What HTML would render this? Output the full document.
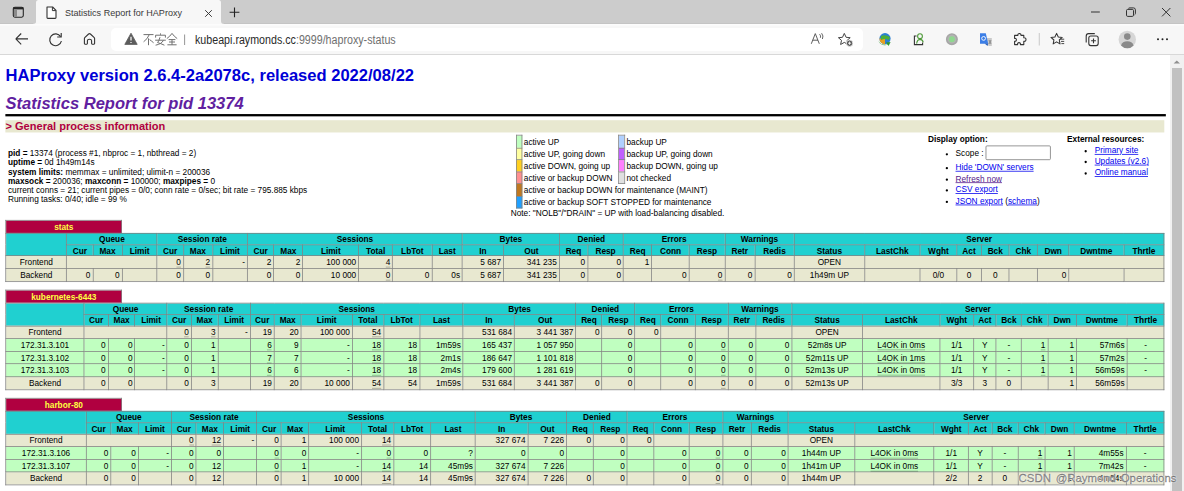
<!DOCTYPE html>
<html><head><meta charset="utf-8"><title>Statistics Report for HAProxy</title>
<style>
*{font-family:"Liberation Sans",sans-serif;}
html,body{margin:0;padding:0;background:#fff;overflow:hidden;width:1184px;height:491px;}
#chrome{position:absolute;left:0;top:0;width:1184px;height:55px;background:#f7f7f7;}
#tabstrip{position:absolute;left:0;top:0;width:1184px;height:24px;background:#cccccc;}
#tab{position:absolute;left:36.2px;top:0;width:184.8px;height:26px;background:#f7f7f7;border-radius:2.5px 2.5px 0 0;}
#toolbar-line{position:absolute;left:0;top:54px;width:1184px;height:1px;background:#d9d9d9;}
#addr{position:absolute;left:111px;top:28px;width:752px;height:23px;background:#fff;border-radius:5px;}
.abs{position:absolute;}
#vp{position:absolute;left:0;top:55px;width:1170px;height:436px;overflow:hidden;background:#fff;}
#sc{transform-origin:0 0;transform:scale(0.767);width:1525.424px;}
#zm{zoom:0.9;padding:8px;}
#zm *{font-family:"Liberation Sans",sans-serif;}
#zm{font-size:12px;font-weight:normal;color:black;background:white;}
#zm th,#zm td{font-size:12px;}
#zm h1{font-size:24px;margin:0 0 10.9px 0;padding-top:8.08px;font-weight:bold;}
#zm h1 a{color:#0000d6;text-decoration:none;}
#zm h2{font-size:24px;font-weight:bold;font-style:italic;color:#6020a0;margin:0 0 -1.2px 0;}
#zm h3{font-size:16px;font-weight:bold;color:#b00040;background:#e8e8d0;margin:0;}
#zm li{margin-top:0.25em;margin-right:20.5px;}
#zm hr.hr{margin:2.4px 0 6px 0;border:0;height:2.6px;background:#000;width:calc(100% + 2px);}
#zm p{margin:1em 0;}
.titre{background:#20D0D0;color:#000000;font-weight:bold;text-align:center;}
.frontend{background:#e8e8d0;}
.backend{background:#e8e8d0;}
.active_down{background:#ff9090;}
.active_going_up{background:#ffd020;}
.active_going_down{background:#ffffa0;}
.active_up{background:#c0ffc0;}
.active_no_check{background:#e0e0e0;}
.backup_going_up{background:#ff80ff;}
.backup_going_down{background:#c060ff;}
.backup_up{background:#b0d0ff;}
.maintain{background:#c07820;}
.softstop{background:#20a0ff;}
a.px{color:#ffff40;text-decoration:none;}
td,th{padding:1px;}
table.tbl{border-collapse:collapse;border-style:none;}
table.tbl td{text-align:right;border:1px solid gray;padding:2px 3px;white-space:nowrap;}
table.tbl td.ac{text-align:center;}
table.tbl th{border:1px solid gray;}
table.tbl th.pxname{background:#b00040;color:#ffff40;font-weight:bold;border-style:solid solid none solid;padding:2px 3px;white-space:nowrap;}
table.tbl th.empty{border-style:none;background:white;}
table.lgd{border-collapse:collapse;border-width:1px;border-style:none none none solid;border-color:black;}
table.lgd td{border:1px solid gray;padding:2px;}
table.lgd td.noborder{border-style:none;padding:2px;white-space:nowrap;}
u{text-decoration:none;border-bottom:1.45px solid rgba(0,0,0,0.33);}
.rls{letter-spacing:0.2em;margin-right:1px;}
ul{margin:0 0 1em 0;padding-left:40px;}
form{margin:0;}
a.lk{color:#0000ee;text-decoration:underline;}
a.lk.vis{color:#551a8b;}
.inp{display:inline-block;vertical-align:-6.5px;box-sizing:border-box;width:94px;height:22px;border:1px solid #767676;border-radius:2px;background:#fff;}
#scroll{position:absolute;left:1170px;top:55px;width:14px;height:436px;background:#f1f1f1;}
#thumb{position:absolute;left:2px;top:13px;width:10px;height:423px;background:#c1c1c1;}
#wm{position:absolute;left:1018.6px;top:472.2px;font-size:11.4px;line-height:13px;word-spacing:1.6px;color:rgba(150,150,150,0.95);-webkit-text-stroke:0.3px rgba(85,85,85,0.8);white-space:nowrap;text-shadow:0 0 1.5px #fff,0 0 1.5px #fff;}
</style></head><body>
<div id="chrome">
<div id="tabstrip"></div>
<div id="tab"></div>
<svg class="abs" style="left:0;top:0" width="1184" height="55" viewBox="0 0 1184 55">
  <!-- tab flares -->
  <path d="M33 24 Q36.2 24 36.2 21 L36.2 24 Z" fill="#f7f7f7"/>
  <path d="M221 21 Q221 24 224 24 L221 24 Z" fill="#f7f7f7"/>
  <!-- tab actions icon -->
  <rect x="13.3" y="7.2" width="10" height="10" rx="1.6" fill="none" stroke="#262626" stroke-width="1.1"/>
  <rect x="13.3" y="7.2" width="10" height="2.2" fill="#262626"/>
  <rect x="14" y="9" width="3" height="8" fill="#8a8a8a"/>
  <!-- page icon -->
  <path d="M47 7 H52.6 L56 10.4 V17.6 Q56 18.4 55.2 18.4 H47.8 Q47 18.4 47 17.6 Z" fill="#fff" stroke="#333" stroke-width="1.1" stroke-linejoin="round"/>
  <path d="M52.4 7.2 V10.6 H55.8" fill="none" stroke="#333" stroke-width="1"/>
  <!-- close tab -->
  <path d="M205.2 10.2 L211.8 16.8 M211.8 10.2 L205.2 16.8" stroke="#333" stroke-width="0.95"/>
  <!-- new tab -->
  <path d="M234.5 7.4 V17.2 M229.6 12.3 H239.4" stroke="#222" stroke-width="1.1"/>
  <!-- window controls -->
  <path d="M1091 12 H1099.8" stroke="#333" stroke-width="1"/>
  <rect x="1126.5" y="9.4" width="7" height="7" rx="1.2" fill="none" stroke="#333" stroke-width="1"/>
  <path d="M1128.4 8.4 Q1128.8 7.9 1130 7.9 H1133.5 Q1135.4 7.9 1135.4 9.8 V13.4 Q1135.4 14.4 1134.6 14.8" fill="none" stroke="#333" stroke-width="1"/>
  <path d="M1162 8 L1170.4 16.4 M1170.4 8 L1162 16.4" stroke="#333" stroke-width="1"/>
  <rect x="0" y="23.2" width="33" height="0.8" fill="#c2c2c2"/><rect x="224" y="23.2" width="960" height="0.8" fill="#c2c2c2"/><rect x="0" y="24" width="1184" height="1.6" fill="#fcfcfc"/>
  <!-- toolbar bottom line -->
  <rect x="0" y="54" width="1184" height="1" fill="#d8d8d8"/>
  <!-- address bar -->
  <rect x="111" y="28" width="752" height="23" rx="5" fill="#ffffff"/>
  <!-- back -->
  <path d="M15.6 38.9 H28 M15.8 38.9 L21.2 33.5 M15.8 38.9 L21.2 44.3" fill="none" stroke="#333" stroke-width="1.15"/>
  <!-- refresh -->
  <path d="M60.6 36.6 A5.9 5.9 0 1 0 61.4 41" fill="none" stroke="#333" stroke-width="1.15"/>
  <path d="M61.2 33 V37 H57.2" fill="none" stroke="#333" stroke-width="1.15"/>
  <!-- home -->
  <path d="M84.4 43.6 V38.6 Q84.4 38 85 37.4 L88.6 34 Q89.5 33.2 90.4 34 L94 37.4 Q94.6 38 94.6 38.6 V43.6 Q94.6 44.2 94 44.2 H92.2 Q91.6 44.2 91.6 43.6 V40.8 Q91.6 39.2 89.5 39.2 Q87.4 39.2 87.4 40.8 V43.6 Q87.4 44.2 86.8 44.2 H85 Q84.4 44.2 84.4 43.6 Z" fill="none" stroke="#333" stroke-width="1.1" stroke-linejoin="round"/>
  <!-- warning -->
  <path d="M131 33.2 L137.2 44.4 H124.8 Z" fill="#5c5c5c" stroke="#5c5c5c" stroke-width="0.8" stroke-linejoin="round"/>
  <path d="M131 36.8 V40.6 M131 42 V43" stroke="#fff" stroke-width="1.2"/>
  <!-- 不安全 -->
  <g fill="none" stroke="#707070" stroke-width="1">
    <path d="M143.5 34.6 H153.5 M149.2 34.8 Q147.5 39 143.6 41.8 M148.5 38.4 V45.2 M149.6 39.6 Q151.6 41 153.6 42.8"/>
    <path d="M160.5 33.4 V34.8 M155.6 37.6 V35.2 H165.4 V37.6 M155.2 40.2 H165.8 M160 37.2 Q159 41 157.6 42.6 Q161 43.6 164.4 45.2 M163.4 40.4 Q161.6 44 155.6 45.2"/>
    <path d="M172 33.4 Q170 36.4 166.8 38.6 M172 33.4 Q174 36.4 177.2 38.6 M168.6 39.6 H175.4 M169 42 H175 M167.4 44.8 H176.6 M172 39.6 V44.8"/>
  </g>
  <rect x="184.2" y="34.5" width="0.9" height="10.5" fill="#8a8a8a"/>
  <!-- read aloud -->
  <path d="M811.3 43.8 L815.3 33.6 L819.3 43.8 M812.7 40.2 H818" fill="none" stroke="#555" stroke-width="0.95"/>
  <path d="M819.6 34.2 Q821.2 35.8 820.4 37.8 M821.6 33.2 Q823.9 35.9 822.4 39" fill="none" stroke="#555" stroke-width="0.9"/>
  <!-- favorite add -->
  <path d="M844.3 33.4 L846.1 37.3 L850.2 37.7 L847.1 40.4 L848 44.5 L844.3 42.4 L840.6 44.5 L841.5 40.4 L838.4 37.7 L842.5 37.3 Z" fill="none" stroke="#444" stroke-width="1" stroke-linejoin="round"/>
  <circle cx="849.6" cy="43.2" r="3.2" fill="#555" stroke="#f7f7f7" stroke-width="0.8"/>
  <path d="M849.6 41.6 V44.8 M848 43.2 H851.2" stroke="#fff" stroke-width="0.9"/>
  <!-- IDM -->
  <circle cx="885" cy="38.6" r="5.6" fill="#2a7fd4"/>
  <path d="M879.4 38.6 A5.6 5.6 0 0 0 885 44.2 L885 38.6 Z" fill="#e8a020"/>
  <path d="M881 36 Q885 34 890 37 L889 40 Q885 38 881 40 Z" fill="#4caf3a"/>
  <path d="M878.2 40.4 Q881 45.6 887.4 44.4 L886 42.6 L890.6 42 L888.6 46 L887.8 44.8 Q881 46.6 878.2 40.4 Z" fill="#2e9a2e"/>
  <!-- person doc -->
  <path d="M916.6 36 H914.4 V44.6 H922.6 V42.4" fill="none" stroke="#333" stroke-width="1.1"/>
  <circle cx="920" cy="36.2" r="2.4" fill="none" stroke="#4f9a3a" stroke-width="1.1"/>
  <path d="M916.6 43.6 Q917.2 39.6 920 39.4 Q922.8 39.6 923.2 42.4" fill="none" stroke="#4f9a3a" stroke-width="1.1"/>
  <!-- gray circle -->
  <circle cx="951.9" cy="39.2" r="5.2" fill="#b3b3b3" stroke="#a6a6a6" stroke-width="1.6"/>
  <circle cx="951.9" cy="39.2" r="3" fill="#8fd88f"/>
  <!-- google translate -->
  <path d="M985.5 38 H991.8 V46 H988.5 Z" fill="#c9c9c9"/>
  <path d="M980 33.3 H985.8 L988.2 43.8 H980 Z" fill="#3c7ee6"/>
  <path d="M984.6 43.6 L987.6 46 L988.2 43.6 Z" fill="#2a5fb8"/>
  <circle cx="983.6" cy="38.4" r="1.9" fill="none" stroke="#fff" stroke-width="0.9"/>
  <path d="M989 40 L991 44 M991 40 L989 44" stroke="#666" stroke-width="0.6"/>
  <!-- extensions -->
  <path d="M1017.8 35.4 Q1017.8 33.2 1019.8 33.6 Q1021.2 34 1021 35.4 L1023.8 35.4 L1023.8 37.8 Q1026 37.6 1026 39.6 Q1026 41.6 1023.8 41.4 L1023.8 44.6 L1020.4 44.6 Q1020.6 42.6 1019 42.6 Q1017.4 42.6 1017.6 44.6 L1014.6 44.6 L1014.6 41.2 Q1016.4 41.4 1016.4 39.8 Q1016.4 38.2 1014.6 38.4 L1014.6 35.4 Z" fill="none" stroke="#333" stroke-width="1.1" stroke-linejoin="round"/>
  <rect x="1038.8" y="33" width="0.9" height="12.5" fill="#c4c4c4"/>
  <!-- favorites list -->
  <path d="M1056.6 33.4 L1058.3 37 L1062.2 37.4 L1059.3 40 L1060 43.9 L1056.6 41.9 L1053.2 43.9 L1053.9 40 L1051 37.4 L1054.9 37 Z" fill="none" stroke="#333" stroke-width="1.05" stroke-linejoin="round"/>
  <path d="M1060.6 39.2 H1064.2 M1061 41.4 H1064.2 M1061.4 43.6 H1064.2" stroke="#333" stroke-width="0.9"/>
  <!-- collections -->
  <rect x="1088.8" y="36" width="9.4" height="9.6" rx="2" fill="none" stroke="#333" stroke-width="1.1"/>
  <path d="M1086.2 42.6 V36.2 Q1086.2 33.6 1088.6 33.6 H1094.8" fill="none" stroke="#333" stroke-width="1.1"/>
  <path d="M1093.5 38.4 V43.2 M1091.1 40.8 H1095.9" stroke="#333" stroke-width="1.1"/>
  <!-- avatar -->
  <circle cx="1127.3" cy="39.5" r="8.7" fill="#d6d6d6"/>
  <circle cx="1127.3" cy="36.6" r="3.3" fill="#8a8a8a"/>
  <path d="M1121 45.4 Q1122.4 41.2 1127.3 41.2 Q1132.2 41.2 1133.6 45.4 Q1131 48.2 1127.3 48.2 Q1123.6 48.2 1121 45.4 Z" fill="#8a8a8a"/>
  <!-- more -->
  <circle cx="1158" cy="39.2" r="1" fill="#222"/><circle cx="1162.5" cy="39.2" r="1" fill="#222"/><circle cx="1167" cy="39.2" r="1" fill="#222"/>
</svg>
<div class="abs" style="left:64.8px;top:7px;font-size:9.8px;line-height:12px;color:#3a3a3a;white-space:nowrap;transform-origin:0 0;transform:scaleX(0.922)">Statistics Report for HAProxy</div>
<div class="abs" style="left:195px;top:32.5px;font-size:12px;line-height:14px;color:#2a2a2a;white-space:nowrap;transform-origin:0 0;transform:scaleX(0.89)">kubeapi.raymonds.cc<span style="color:#6f6f6f">:9999/haproxy-status</span></div>

</div>
<div id="vp"><div id="sc"><div id="zm">
<h1><a>HAProxy version 2.6.4-2a2078c, released 2022/08/22</a></h1>
<h2>Statistics Report for pid 13374</h2>
<hr width="100%" class="hr">
<h3>&gt; General process information</h3>
<table border="0" class="info"><tr><td align="left" nowrap width="1%" style="padding-left:2.4px">
<p><b>pid = </b> 13374 (process #1, nbproc = 1, nbthread = 2)<br>
<b>uptime = </b> 0d 1h49m14s<br>
<b>system limits:</b> memmax = unlimited; ulimit-n = 200036<br>
<b>maxsock = </b> 200036; <b>maxconn = </b> 100000; <b>maxpipes = </b> 0<br>
current conns = 21; current pipes = 0/0; conn rate = 0/sec; bit rate = 795.885 kbps<br>
Running tasks: 0/40; idle = 99 %<br>
</p></td><td align="center" nowrap style="padding-top:2.3px;padding-bottom:2.4px">
<table class="lgd"><tr><td class="active_up">&nbsp;</td><td class="noborder">active UP </td><td class="backup_up">&nbsp;</td><td class="noborder">backup UP </td></tr>
<tr><td class="active_going_down"></td><td class="noborder">active UP, going down </td><td class="backup_going_down"></td><td class="noborder">backup UP, going down </td></tr>
<tr><td class="active_going_up"></td><td class="noborder">active DOWN, going up </td><td class="backup_going_up"></td><td class="noborder">backup DOWN, going up </td></tr>
<tr><td class="active_down"></td><td class="noborder">active or backup DOWN &nbsp;</td><td class="active_no_check"></td><td class="noborder">not checked </td></tr>
<tr><td class="maintain"></td><td class="noborder" colspan="3">active or backup DOWN for maintenance (MAINT) &nbsp;</td></tr>
<tr><td class="softstop"></td><td class="noborder" colspan="3">active or backup SOFT STOPPED for maintenance &nbsp;</td></tr>
</table>
Note: "NOLB"/"DRAIN" = UP with load-balancing disabled.</td>
<td align="left" valign="top" nowrap width="1%"><b>Display option:</b><ul style="margin-top: 0.25em;">
<li><form>Scope : <span class="inp"></span></form></li>
<li><a class="lk">Hide 'DOWN' servers</a></li>
<li><a class="lk vis">Refresh now</a></li>
<li><a class="lk">CSV export</a></li>
<li><a class="lk">JSON export</a> (<a class="lk">schema</a>)</li>
</ul></td><td align="left" valign="top" nowrap width="1%"><b>External resources:</b><ul style="margin-top: 0.25em;">
<li><a class="lk">Primary site</a><br></li>
<li><a class="lk">Updates (v2.6)</a><br></li>
<li><a class="lk">Online manual</a><br></li>
</ul></td></tr></table>

<table class="tbl" width="100%"><tr class="titre" style="background:transparent"><th class="pxname" width="10%"><a class="px">stats</a></th><th class="empty" width="90%"></th></tr></table>
<table class="tbl" width="100%">
<tr class="titre"><th rowspan="2"></th><th colspan="3">Queue</th><th colspan="3">Session rate</th><th colspan="6">Sessions</th><th colspan="2">Bytes</th><th colspan="2">Denied</th><th colspan="3">Errors</th><th colspan="2">Warnings</th><th colspan="9">Server</th></tr>
<tr class="titre"><th>Cur</th><th>Max</th><th>Limit</th><th>Cur</th><th>Max</th><th>Limit</th><th>Cur</th><th>Max</th><th>Limit</th><th>Total</th><th>LbTot</th><th>Last</th><th>In</th><th>Out</th><th>Req</th><th>Resp</th><th>Req</th><th>Conn</th><th>Resp</th><th>Retr</th><th>Redis</th><th>Status</th><th>LastChk</th><th>Wght</th><th>Act</th><th>Bck</th><th>Chk</th><th>Dwn</th><th>Dwntme</th><th>Thrtle</th></tr>
<tr class="frontend"><td class="ac">Frontend</td><td colspan="3"></td><td><u>0</u></td><td><u>2</u></td><td>-</td><td>2</td><td>2</td><td>10<span class="rls">0</span>000</td><td><u>4</u></td><td></td><td></td><td><span class="rls">5</span>687</td><td>34<span class="rls">1</span>235</td><td>0</td><td>0</td><td>1</td><td></td><td></td><td></td><td></td><td class="ac">OPEN</td><td class="ac" colspan="8"></td></tr>
<tr class="backend"><td class="ac">Backend</td><td>0</td><td>0</td><td></td><td>0</td><td>0</td><td></td><td>0</td><td>0</td><td>1<span class="rls">0</span>000</td><td><u>0</u></td><td>0</td><td>0s</td><td><span class="rls">5</span>687</td><td>34<span class="rls">1</span>235</td><td>0</td><td>0</td><td></td><td>0</td><td><u>0</u></td><td>0</td><td>0</td><td class="ac">1h49m UP</td><td class="ac">&nbsp;</td><td class="ac">0/0</td><td class="ac">0</td><td class="ac">0</td><td></td><td>0</td><td></td><td class="ac"></td></tr>
</table><p></p>
<table class="tbl" width="100%"><tr class="titre" style="background:transparent"><th class="pxname" width="10%"><a class="px">kubernetes-6443</a></th><th class="empty" width="90%"></th></tr></table>
<table class="tbl" width="100%">
<tr class="titre"><th rowspan="2"></th><th colspan="3">Queue</th><th colspan="3">Session rate</th><th colspan="6">Sessions</th><th colspan="2">Bytes</th><th colspan="2">Denied</th><th colspan="3">Errors</th><th colspan="2">Warnings</th><th colspan="9">Server</th></tr>
<tr class="titre"><th>Cur</th><th>Max</th><th>Limit</th><th>Cur</th><th>Max</th><th>Limit</th><th>Cur</th><th>Max</th><th>Limit</th><th>Total</th><th>LbTot</th><th>Last</th><th>In</th><th>Out</th><th>Req</th><th>Resp</th><th>Req</th><th>Conn</th><th>Resp</th><th>Retr</th><th>Redis</th><th>Status</th><th>LastChk</th><th>Wght</th><th>Act</th><th>Bck</th><th>Chk</th><th>Dwn</th><th>Dwntme</th><th>Thrtle</th></tr>
<tr class="frontend"><td class="ac">Frontend</td><td colspan="3"></td><td><u>0</u></td><td><u>3</u></td><td>-</td><td>19</td><td>20</td><td>10<span class="rls">0</span>000</td><td><u>54</u></td><td></td><td></td><td>53<span class="rls">1</span>684</td><td><span class="rls">3</span>44<span class="rls">1</span>387</td><td>0</td><td>0</td><td>0</td><td></td><td></td><td></td><td></td><td class="ac">OPEN</td><td class="ac" colspan="8"></td></tr>
<tr class="active_up"><td class="ac">172.31.3.101</td><td>0</td><td>0</td><td>-</td><td>0</td><td>1</td><td></td><td><u>6</u></td><td>9</td><td>-</td><td><u>18</u></td><td>18</td><td>1m59s</td><td>16<span class="rls">5</span>437</td><td><span class="rls">1</span>05<span class="rls">7</span>950</td><td></td><td>0</td><td></td><td>0</td><td><u>0</u></td><td>0</td><td>0</td><td class="ac">52m8s UP</td><td class="ac"><u>L4OK in 0ms</u></td><td class="ac">1/1</td><td class="ac">Y</td><td class="ac">-</td><td><u>1</u></td><td>1</td><td>57m6s</td><td class="ac">-</td></tr>
<tr class="active_up"><td class="ac">172.31.3.102</td><td>0</td><td>0</td><td>-</td><td>0</td><td>1</td><td></td><td><u>7</u></td><td>7</td><td>-</td><td><u>18</u></td><td>18</td><td>2m1s</td><td>18<span class="rls">6</span>647</td><td><span class="rls">1</span>10<span class="rls">1</span>818</td><td></td><td>0</td><td></td><td>0</td><td><u>0</u></td><td>0</td><td>0</td><td class="ac">52m11s UP</td><td class="ac"><u>L4OK in 1ms</u></td><td class="ac">1/1</td><td class="ac">Y</td><td class="ac">-</td><td><u>1</u></td><td>1</td><td>57m2s</td><td class="ac">-</td></tr>
<tr class="active_up"><td class="ac">172.31.3.103</td><td>0</td><td>0</td><td>-</td><td>0</td><td>1</td><td></td><td><u>6</u></td><td>6</td><td>-</td><td><u>18</u></td><td>18</td><td>2m4s</td><td>17<span class="rls">9</span>600</td><td><span class="rls">1</span>28<span class="rls">1</span>619</td><td></td><td>0</td><td></td><td>0</td><td><u>0</u></td><td>0</td><td>0</td><td class="ac">52m13s UP</td><td class="ac"><u>L4OK in 0ms</u></td><td class="ac">1/1</td><td class="ac">Y</td><td class="ac">-</td><td><u>1</u></td><td>1</td><td>56m59s</td><td class="ac">-</td></tr>
<tr class="backend"><td class="ac">Backend</td><td>0</td><td>0</td><td></td><td>0</td><td>3</td><td></td><td>19</td><td>20</td><td>1<span class="rls">0</span>000</td><td><u>54</u></td><td>54</td><td>1m59s</td><td>53<span class="rls">1</span>684</td><td><span class="rls">3</span>44<span class="rls">1</span>387</td><td>0</td><td>0</td><td></td><td>0</td><td><u>0</u></td><td>0</td><td>0</td><td class="ac">52m13s UP</td><td class="ac">&nbsp;</td><td class="ac">3/3</td><td class="ac">3</td><td class="ac">0</td><td></td><td>1</td><td>56m59s</td><td class="ac"></td></tr>
</table><p></p>
<table class="tbl" width="100%"><tr class="titre" style="background:transparent"><th class="pxname" width="10%"><a class="px">harbor-80</a></th><th class="empty" width="90%"></th></tr></table>
<table class="tbl" width="100%">
<tr class="titre"><th rowspan="2"></th><th colspan="3">Queue</th><th colspan="3">Session rate</th><th colspan="6">Sessions</th><th colspan="2">Bytes</th><th colspan="2">Denied</th><th colspan="3">Errors</th><th colspan="2">Warnings</th><th colspan="9">Server</th></tr>
<tr class="titre"><th>Cur</th><th>Max</th><th>Limit</th><th>Cur</th><th>Max</th><th>Limit</th><th>Cur</th><th>Max</th><th>Limit</th><th>Total</th><th>LbTot</th><th>Last</th><th>In</th><th>Out</th><th>Req</th><th>Resp</th><th>Req</th><th>Conn</th><th>Resp</th><th>Retr</th><th>Redis</th><th>Status</th><th>LastChk</th><th>Wght</th><th>Act</th><th>Bck</th><th>Chk</th><th>Dwn</th><th>Dwntme</th><th>Thrtle</th></tr>
<tr class="frontend"><td class="ac">Frontend</td><td colspan="3"></td><td><u>0</u></td><td><u>12</u></td><td>-</td><td>0</td><td>1</td><td>10<span class="rls">0</span>000</td><td><u>14</u></td><td></td><td></td><td>32<span class="rls">7</span>674</td><td><span class="rls">7</span>226</td><td>0</td><td>0</td><td>0</td><td></td><td></td><td></td><td></td><td class="ac">OPEN</td><td class="ac" colspan="8"></td></tr>
<tr class="active_up"><td class="ac">172.31.3.106</td><td>0</td><td>0</td><td>-</td><td>0</td><td>0</td><td></td><td><u>0</u></td><td>0</td><td>-</td><td><u>0</u></td><td>0</td><td>?</td><td>0</td><td>0</td><td></td><td>0</td><td></td><td>0</td><td><u>0</u></td><td>0</td><td>0</td><td class="ac">1h44m UP</td><td class="ac"><u>L4OK in 0ms</u></td><td class="ac">1/1</td><td class="ac">Y</td><td class="ac">-</td><td><u>1</u></td><td>1</td><td>4m55s</td><td class="ac">-</td></tr>
<tr class="active_up"><td class="ac">172.31.3.107</td><td>0</td><td>0</td><td>-</td><td>0</td><td>12</td><td></td><td><u>0</u></td><td>1</td><td>-</td><td><u>14</u></td><td>14</td><td>45m9s</td><td>32<span class="rls">7</span>674</td><td><span class="rls">7</span>226</td><td></td><td>0</td><td></td><td>0</td><td><u>0</u></td><td>0</td><td>0</td><td class="ac">1h41m UP</td><td class="ac"><u>L4OK in 0ms</u></td><td class="ac">1/1</td><td class="ac">Y</td><td class="ac">-</td><td><u>1</u></td><td>1</td><td>7m42s</td><td class="ac">-</td></tr>
<tr class="backend"><td class="ac">Backend</td><td>0</td><td>0</td><td></td><td>0</td><td>12</td><td></td><td>0</td><td>1</td><td>1<span class="rls">0</span>000</td><td><u>14</u></td><td>14</td><td>45m9s</td><td>32<span class="rls">7</span>674</td><td><span class="rls">7</span>226</td><td>0</td><td>0</td><td></td><td>0</td><td><u>0</u></td><td>0</td><td>0</td><td class="ac">1h44m UP</td><td class="ac">&nbsp;</td><td class="ac">2/2</td><td class="ac">2</td><td class="ac">0</td><td></td><td>1</td><td>4m54s</td><td class="ac"></td></tr>
</table><p></p>

</div></div></div>
<div id="scroll"><div id="thumb"></div><svg class="abs" style="left:0;top:0" width="14" height="13"><path d="M3.6 8.4 L6.8 5.6 L10 8.4 Z" fill="#8f8f8f"/></svg></div>
<div id="wm">CSDN @Raymond Operations</div>
</body></html>
